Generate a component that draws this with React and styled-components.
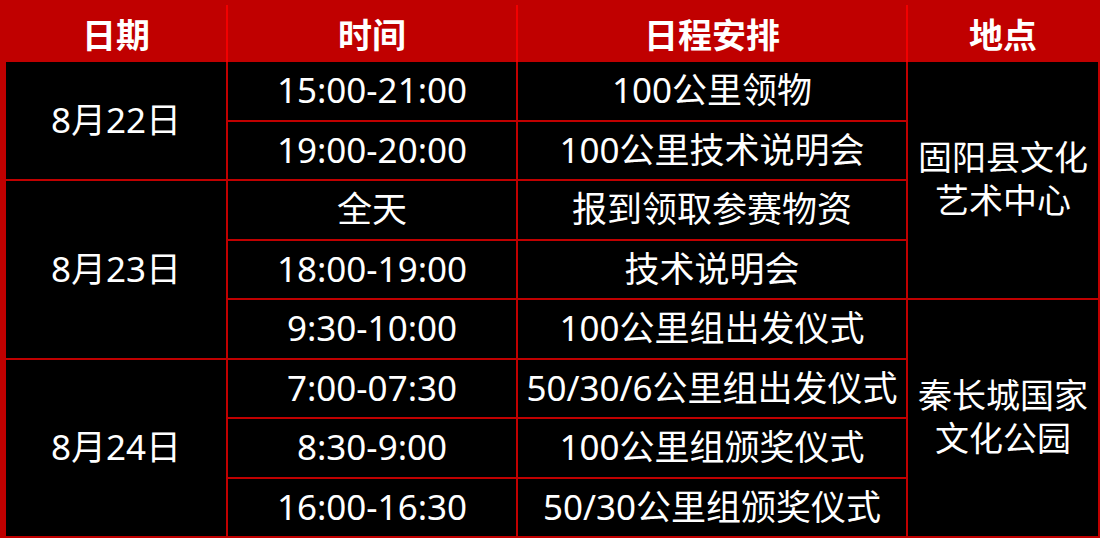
import styled, { createGlobalStyle } from 'styled-components';

const GlobalStyle = createGlobalStyle`
	html, body {
		margin: 0;
		padding: 0;
		background: #c00000;
	}
	body {
		font-family: "Noto Sans", "Noto Sans CJK SC", sans-serif;
	}
`;

const columns = '220px 288px 388px 190px';

const dates = [
	{ label: '8月22日', row: 1, span: 2 },
	{ label: '8月23日', row: 3, span: 3 },
	{ label: '8月24日', row: 6, span: 3 },
];

const items = [
	['15:00-21:00', '100公里领物'],
	['19:00-20:00', '100公里技术说明会'],
	['全天', '报到领取参赛物资'],
	['18:00-19:00', '技术说明会'],
	['9:30-10:00', '100公里组出发仪式'],
	['7:00-07:30', '50/30/6公里组出发仪式'],
	['8:30-9:00', '100公里组颁奖仪式'],
	['16:00-16:30', '50/30公里组颁奖仪式'],
];

const places = [
	{ lines: ['固阳县文化', '艺术中心'], row: 1, span: 4 },
	{ lines: ['秦长城国家', '文化公园'], row: 5, span: 4 },
];

const App = () => {
	return (
		<Page>
			<GlobalStyle />
			<Header>
				<HeaderGrid>
					<HeadCell>日期</HeadCell>
					<HeadCell>时间</HeadCell>
					<HeadCell>日程安排</HeadCell>
					<HeadCell>地点</HeadCell>
				</HeaderGrid>
			</Header>
			<Body>
				{dates.map((d) => (
					<Cell key={d.label} $col={1} $row={d.row} $span={d.span}>
						{d.label}
					</Cell>
				))}
				{items.map(([time, what], i) => [
					<Cell key={'t' + i} $col={2} $row={i + 1} $span={1}>
						{time}
					</Cell>,
					<Cell key={'w' + i} $col={3} $row={i + 1} $span={1}>
						{what}
					</Cell>,
				])}
				{places.map((p) => (
					<PlaceCell key={p.row} $col={4} $row={p.row} $span={p.span}>
						{p.lines.map((l) => (
							<PlaceLine key={l}>{l}</PlaceLine>
						))}
					</PlaceCell>
				))}
			</Body>
		</Page>
	);
};

export default App;

const Page = styled.div`
	width: 1100px;
	height: 538px;
	background: #c00000;
	overflow: hidden;
`;

const Header = styled.div`
	height: 62px;
	padding: 5px 2px 0 6px;
	box-sizing: border-box;
	background: #c00000;
`;

const HeaderGrid = styled.div`
	display: grid;
	grid-template-columns: ${columns};
	column-gap: 2px;
	height: 100%;
	background: #f20000;
`;

const HeadCell = styled.div`
	display: flex;
	align-items: center;
	justify-content: center;
	background: #c00000;
	color: #fff;
	font-family: "Noto Sans CJK SC", sans-serif;
	font-size: 34px;
	font-weight: 700;
	padding-bottom: 1px;
`;

const Body = styled.div`
	display: grid;
	grid-template-columns: ${columns};
	grid-template-rows: repeat(8, 1fr);
	gap: 2px;
	height: 474px;
	margin: 0 2px 0 6px;
	background: #c00000;
`;

const Cell = styled.div`
	grid-column: ${(p) => p.$col};
	grid-row: ${(p) => p.$row} / span ${(p) => p.$span};
	display: flex;
	align-items: center;
	justify-content: center;
	background: #000;
	color: #fff;
	font-size: 35px;
	white-space: nowrap;
	line-height: 1;
	padding-bottom: 2px;
`;

const PlaceCell = styled(Cell)`
	flex-direction: column;
	gap: 8px;
`;

const PlaceLine = styled.span`
	display: block;
	line-height: 35px;
	font-size: 34px;
`;
